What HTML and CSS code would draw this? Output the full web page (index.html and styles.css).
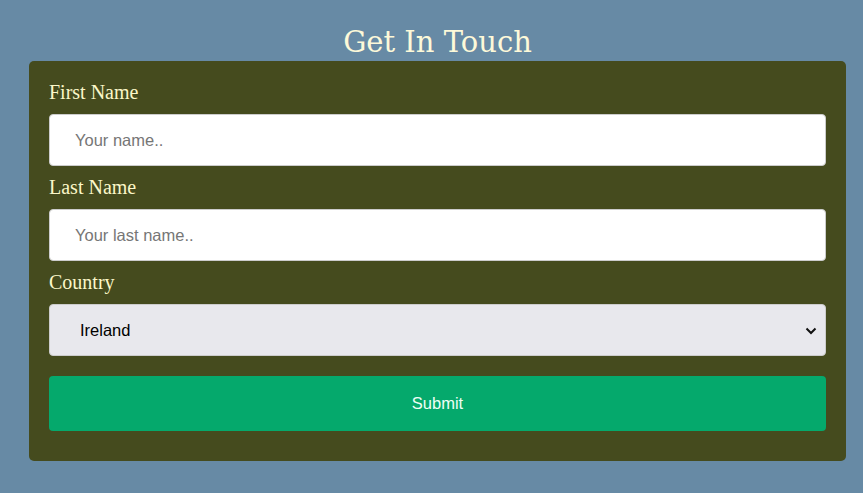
FILE: index.html
```html
<!DOCTYPE html>
<html>
<head>
<meta charset="utf-8">
<link rel="stylesheet" href="styles.css">
</head>
<body>
<h1 class="title">Get In Touch</h1>
<form class="card">
  <label class="label" for="fname">First Name</label>
  <input class="field" id="fname" type="text" placeholder="Your name..">
  <label class="label" for="lname">Last Name</label>
  <input class="field" id="lname" type="text" placeholder="Your last name..">
  <label class="label" for="country">Country</label>
  <div class="select-wrap">
    <select class="field select" id="country">
      <option>Ireland</option>
      <option>Australia</option>
      <option>Canada</option>
    </select>
    <svg class="chevron" width="12" height="8" viewBox="0 0 12 8"><path d="M1.5 1.5 L6 6 L10.5 1.5" fill="none" stroke="#111" stroke-width="2"/></svg>
  </div>
  <button class="submit" type="button">Submit</button>
</form>
</body>
</html>
```
FILE: styles.css
```css
html, body {
  margin: 0;
  padding: 0;
}
body {
  background: #678aa5;
  width: 863px;
  height: 493px;
  overflow: hidden;
}
.title {
  margin: 0;
  padding-top: 24px;
  height: 37px;
  text-align: center;
  font-family: "DejaVu Serif", serif;
  font-weight: normal;
  font-size: 29px;
  line-height: 37px;
  color: #fdf9d9;
  padding-left: 12px;
  box-sizing: content-box;
}
.card {
  display: flow-root;
  margin-left: 29px;
  width: 817px;
  box-sizing: border-box;
  background: #454b1e;
  border-radius: 5px;
  padding: 20px 20px 20px;
}
.label {
  display: block;
  font-family: "Liberation Serif", serif;
  font-size: 20px;
  line-height: 23px;
  color: #fbf7c9;
}
.field {
  display: block;
  width: 100%;
  box-sizing: border-box;
  height: 52px;
  margin: 10px 0;
  padding: 0 25px;
  border: 1px solid #ccc;
  border-radius: 4px;
  background: #fff;
  font-family: "Liberation Sans", Arial, sans-serif;
  font-size: 16.5px;
  color: #222;
  outline: none;
}
.field::placeholder {
  color: #767676;
}
.select-wrap {
  position: relative;
  margin: 10px 0 20px;
}
.select {
  margin: 0;
  -webkit-appearance: none;
  appearance: none;
  background: #e8e8ed;
  padding: 0 30px;
  color: #000;
  font-size: 16.5px;
}
.chevron {
  position: absolute;
  right: 9px;
  top: 23px;
}
.submit {
  display: block;
  width: 100%;
  height: 55px;
  margin: 0 0 10px;
  border: none;
  border-radius: 4px;
  background: #05a96c;
  color: #effff5;
  font-family: "Liberation Sans", Arial, sans-serif;
  font-size: 16.5px;
}
```
